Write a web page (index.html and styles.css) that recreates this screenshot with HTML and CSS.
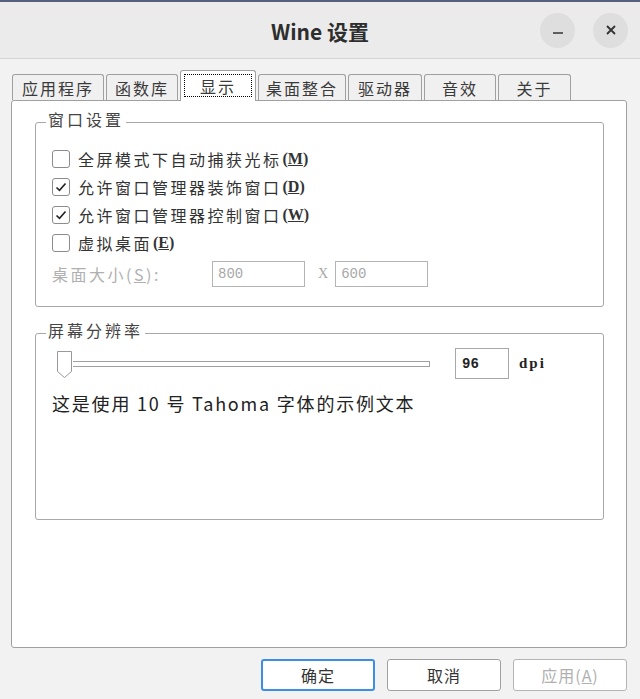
FILE: index.html
```html
<!DOCTYPE html>
<html>
<head>
    <title>Wine 设置</title>
    <link rel="stylesheet" href="styles.css">
</head>
<body>
    <div class="desktop"></div>
    <div class="window">
        <div class="titlebar">
            <div></div>
            <div class="title">Wine 设置</div>
            <div class="controls">
                <span class="ctl"><svg width="14" height="14" viewBox="0 0 14 14"><path d="M2 10h10" stroke="#333" stroke-width="1.5"/></svg></span>
                <span class="ctl"><svg width="14" height="14" viewBox="0 0 14 14"><path d="M3 3l8 8M11 3l-8 8" stroke="#333" stroke-width="1.8"/></svg></span>
            </div>
        </div>

        <div class="content">
            <div class="tabs">
                <div class="tab" style="width:92px">应用程序</div>
                <div class="tab" style="width:72px">函数库</div>
                <div class="tab active" style="width:76px"><span class="focus">显示</span></div>
                <div class="tab" style="width:88px">桌面整合</div>
                <div class="tab" style="width:74px">驱动器</div>
                <div class="tab" style="width:72px">音效</div>
                <div class="tab" style="width:73px">关于</div>
            </div>

            <div class="panel">
                <div class="group window-group">
                    <span class="legend">窗口设置</span>
                    <label class="row"><span class="check"></span>全屏模式下自动捕获光标<span class="key">(<u>M</u>)</span></label>
                    <label class="row"><span class="check on"><svg width="12" height="10" viewBox="0 0 12 10"><path d="M1.5 5.5l3 2.8L10.5 1.5" fill="none" stroke="#222" stroke-width="1.6"/></svg></span>允许窗口管理器装饰窗口<span class="key">(<u>D</u>)</span></label>
                    <label class="row"><span class="check on"><svg width="12" height="10" viewBox="0 0 12 10"><path d="M1.5 5.5l3 2.8L10.5 1.5" fill="none" stroke="#222" stroke-width="1.6"/></svg></span>允许窗口管理器控制窗口<span class="key">(<u>W</u>)</span></label>
                    <label class="row"><span class="check"></span>虚拟桌面<span class="key">(<u>E</u>)</span></label>
                    <div class="size-row">
                        <span class="size-label">桌面大小(<u>S</u>):</span>
                        <span class="field disabled">800</span>
                        <span class="times">X</span>
                        <span class="field disabled">600</span>
                    </div>
                </div>

                <div class="group dpi-group">
                    <span class="legend">屏幕分辨率</span>
                    <div class="dpi-row">
                        <div class="slider">
                            <svg class="thumb" width="17" height="29" viewBox="0 0 17 29"><path d="M1.5 1.5h14v20l-7 6l-7-6z" fill="#fff" stroke="#999" stroke-width="1"/></svg>
                            <div class="track"></div>
                        </div>
                        <span class="field dpi-field">96</span>
                        <span class="dpi-unit">dpi</span>
                    </div>
                    <div class="sample">这是使用 10 号 Tahoma 字体的示例文本</div>
                </div>
            </div>

            <div class="buttons">
                <button class="btn default">确定</button>
                <button class="btn">取消</button>
                <button class="btn disabled">应用(<u>A</u>)</button>
            </div>
        </div>
    </div>
</body>
</html>
```

FILE: styles.css
```css
body {
    margin: 0;
    background: #f2f2f2;
    font-family: "Noto Sans CJK SC", "Liberation Sans", sans-serif;
    color: #333;
    overflow: hidden;
}
.desktop {
    height: 2px;
    background: #55607e;
}
.window {
    background: #f2f2f2;
}
.titlebar {
    height: 56px;
    background: #ebebeb;
    border-bottom: 1px solid #d4d4d4;
    display: grid;
    grid-template-columns: 1fr auto 1fr;
    align-items: center;
}
.title {
    font-size: 21px;
    font-weight: bold;
    color: #2e2e2e;
    padding-top: 1px;
}
.controls {
    justify-self: end;
    display: flex;
    gap: 18px;
    padding-right: 12px;
}
.ctl {
    width: 35px;
    height: 35px;
    border-radius: 50%;
    background: #dedede;
    display: flex;
    align-items: center;
    justify-content: center;
}
.content {
    padding: 10px 13px 0 11px;
}
.tabs {
    display: flex;
    align-items: flex-end;
    gap: 2px;
    padding-left: 1px;
    height: 31px;
    position: relative;
    z-index: 1;
}
.tab {
    height: 26px;
    box-sizing: border-box;
    border: 1px solid #a0a0a0;
    border-bottom: none;
    border-radius: 3px 3px 0 0;
    background: #f0f0f0;
    font-size: 16px;
    letter-spacing: 2px;
    display: flex;
    align-items: center;
    justify-content: center;
    color: #3a3a3a;
}
.tab.active {
    height: 31px;
    background: #fff;
    margin-bottom: -1px;
    padding: 3px 3px 4px;
}
.focus {
    flex: 1;
    align-self: stretch;
    border: 1px dotted #000;
    display: flex;
    align-items: center;
    justify-content: center;
}
.panel {
    height: 548px;
    box-sizing: border-box;
    background: #fff;
    border: 1px solid #a0a0a0;
    border-radius: 3px;
    padding: 21px 22px 0 23px;
}
.group {
    position: relative;
    border: 1px solid #a8a8a8;
    border-radius: 3px;
    padding: 0 16px;
}
.legend {
    position: absolute;
    top: -14px;
    left: 10px;
    background: #fff;
    padding: 0 2px;
    font-size: 16px;
    line-height: 20px;
    letter-spacing: 3px;
    color: #444;
}
.window-group {
    height: 185px;
    padding-top: 22px;
    box-sizing: border-box;
}
.row {
    display: flex;
    align-items: center;
    height: 28px;
    font-size: 16px;
    letter-spacing: 2.5px;
    color: #333;
}
.check {
    width: 18px;
    height: 18px;
    box-sizing: border-box;
    border: 1px solid #8c8c8c;
    border-radius: 3px;
    background: #fff;
    margin-right: 8px;
    display: flex;
    align-items: center;
    justify-content: center;
}
.key {
    font-family: "Liberation Serif", serif;
    font-weight: bold;
    letter-spacing: 0;
    margin-left: 1px;
}
.size-row {
    display: flex;
    align-items: center;
    height: 26px;
    margin-top: 4px;
}
.size-label {
    font-size: 16px;
    letter-spacing: 2.5px;
    color: #b0b0b0;
    width: 160px;
}
.field {
    box-sizing: border-box;
    border: 1px solid #a8a8a8;
    background: #fff;
    font-family: "Liberation Mono", monospace;
    font-size: 14px;
    display: flex;
    align-items: center;
    padding-left: 5px;
}
.field.disabled {
    width: 93px;
    height: 26px;
    color: #a8a8a8;
    border-color: #b4b4b4;
}
.times {
    font-family: "Liberation Serif", serif;
    font-size: 14px;
    color: #a8a8a8;
    margin: 0 7px 0 13px;
}
.dpi-group {
    margin-top: 26px;
    height: 187px;
    box-sizing: border-box;
    padding-top: 14px;
}
.dpi-row {
    display: flex;
    align-items: center;
    height: 31px;
}
.slider {
    flex: none;
    display: flex;
    align-items: center;
    width: 378px;
    box-sizing: border-box;
    padding-left: 4px;
}
.thumb {
    flex: none;
    margin-top: 2px;
}
.track {
    flex: 1;
    height: 6px;
    box-sizing: border-box;
    border: 1px solid #a0a0a0;
    border-left: none;
    background: #fff;
}
.dpi-field {
    width: 54px;
    height: 31px;
    margin-left: 25px;
    font-weight: bold;
    color: #222;
    padding-left: 6px;
}
.dpi-unit {
    font-family: "Liberation Serif", serif;
    font-weight: bold;
    font-size: 15px;
    letter-spacing: 2px;
    margin-left: 10px;
    color: #222;
}
.sample {
    font-size: 18px;
    letter-spacing: 1.8px;
    margin-top: 11px;
    color: #222;
}
.buttons {
    display: flex;
    justify-content: flex-end;
    gap: 12px;
    padding-top: 11px;
}
.btn {
    width: 114px;
    height: 32px;
    box-sizing: border-box;
    background: #fff;
    border: 1px solid #a0a0a0;
    border-radius: 3px;
    font-family: "Noto Sans CJK SC", sans-serif;
    font-size: 16px;
    letter-spacing: 1px;
    color: #333;
    padding: 0;
}
.btn.default {
    border: 2px solid #3d8ee6;
}
.btn.disabled {
    color: #b0b0b0;
    border-color: #b4b4b4;
}
```
